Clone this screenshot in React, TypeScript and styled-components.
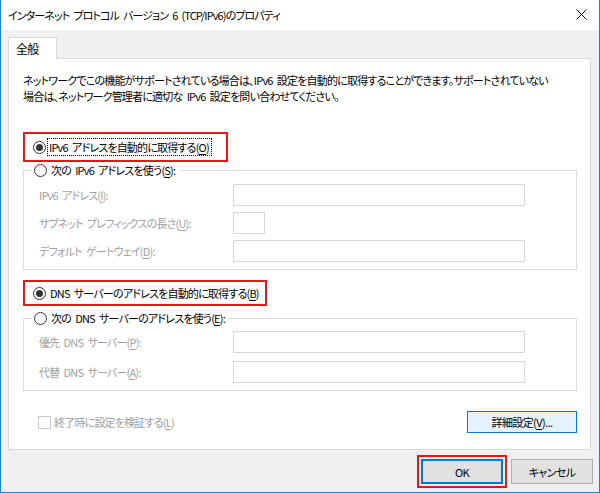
import React from "react"
import styled, { createGlobalStyle } from "styled-components"

const GlobalStyle = createGlobalStyle`
  html, body {
    margin: 0;
    padding: 0;
    background: #ffffff;
  }
  * {
    box-sizing: border-box;
  }
`

const font = `"Noto Sans CJK JP", "Noto Sans", sans-serif`

const Window = styled.div`
  width: 600px;
  height: 493px;
  display: flex;
  flex-direction: column;
  border: 1px solid #1883d7;
  border-top: none;
  background: #f0f0f0;
  font-family: ${font};
  font-size: 11px;
  letter-spacing: -0.8px;
  word-spacing: 2.5px;
  font-feature-settings: "palt" 1;
  color: #000;
  white-space: nowrap;
`

const TitleBar = styled.div`
  height: 30px;
  flex: none;
  display: flex;
  align-items: center;
  justify-content: space-between;
  background: #ffffff;
  padding: 0 12px 1px 7px;
`

const Title = styled.span`
  font-size: 11px;
  letter-spacing: -0.9px;
`

const CloseButton = styled.span`
  display: flex;
  align-items: center;
  margin-top: -1px;
`

const Body = styled.div`
  flex: 1;
  display: flex;
  flex-direction: column;
  padding: 7px 8px 0 7px;
`

const TabStrip = styled.div`
  display: flex;
  position: relative;
  z-index: 1;
`

const Tab = styled.div`
  width: 49px;
  height: 22px;
  padding: 3px 0 0 7px;
  background: #ffffff;
  border: 1px solid #d9d9d9;
  border-bottom: none;
  line-height: 16px;
  font-size: 12px;
`

const Panel = styled.div`
  margin-top: -1px;
  background: #ffffff;
  border: 1px solid #d9d9d9;
  padding: 13px 13px 16px 14px;
  display: flex;
  flex-direction: column;
`

const Description = styled.p`
  margin: 0 0 28px;
  line-height: 16px;
`

const Highlight = styled.div<{ $width: number; $pad: number; $top?: number }>`
  width: ${({ $width }) => $width}px;
  margin-top: ${({ $top }) => $top ?? 0}px;
  border: 2px solid #e8141b;
  padding: ${({ $pad }) => $pad}px 0 ${({ $pad }) => $pad}px 8px;
  display: flex;
`

const RadioRow = styled.label`
  display: flex;
  align-items: center;
  gap: 2px;
  height: 16px;
  line-height: 16px;
`

const RadioCircle = styled.span<{ $checked?: boolean }>`
  width: 13px;
  height: 13px;
  flex: none;
  border-radius: 50%;
  border: 1px solid #333333;
  background: #ffffff;
  display: flex;
  align-items: center;
  justify-content: center;

  &::after {
    content: "";
    width: 7px;
    height: 7px;
    border-radius: 50%;
    background: ${({ $checked }) => ($checked ? "#333333" : "transparent")};
  }
`

const FocusText = styled.span`
  outline: 1px dotted #000;
  outline-offset: 0;
  padding: 0 2px 0 1px;
`

const PlainText = styled.span`
  padding-left: 2px;
`

const GroupBox = styled.fieldset<{ $top: number; $gap: number }>`
  margin: ${({ $top }) => $top}px 0 0;
  border: 1px solid #dcdcdc;
  padding: ${({ $top }) => ($top > 0 ? 5 : 6)}px 51px 7px 15px;
  display: flex;
  flex-direction: column;
  gap: ${({ $gap }) => $gap}px;
  min-width: 0;
`

const Legend = styled.legend`
  margin-left: -7px;
  padding: 0 4px 0 2px;
  background: #ffffff;
`

const FieldRow = styled.div`
  display: flex;
  align-items: center;
  justify-content: space-between;
  height: 22px;
`

const FieldLabel = styled.span`
  color: #a0a0a0;
`

const TextBox = styled.div<{ $width: number; $spacer?: number }>`
  width: ${({ $width }) => $width}px;
  margin-right: ${({ $spacer }) => $spacer ?? 0}px;
  height: 22px;
  border: 1px solid #d7d7d7;
  background: #ffffff;
`

const OptionsRow = styled.div`
  margin-top: 20px;
  display: flex;
  align-items: center;
  justify-content: space-between;
  padding-left: 15px;
`

const CheckRow = styled.label`
  display: flex;
  align-items: center;
  gap: 3px;
  color: #a0a0a0;
`

const CheckBox = styled.span`
  width: 13px;
  height: 13px;
  border: 1px solid #c6c6c6;
  background: #ffffff;
`

const Button = styled.button<{ $variant?: "accent" | "default" | "plain" }>`
  font-family: ${font};
  font-size: 11px;
  letter-spacing: -0.6px;
  font-feature-settings: "palt" 1;
  color: #000;
  height: ${({ $variant }) => ($variant === "accent" ? 22 : 25)}px;
  width: ${({ $variant }) => ($variant === "accent" ? 110 : 82)}px;
  padding: 0;
  border-radius: 0;
  background: ${({ $variant }) => ($variant === "accent" ? "#e5f1fb" : "#e1e1e1")};
  border: ${({ $variant }) =>
    $variant === "default"
      ? "2px solid #0078d7"
      : $variant === "accent"
      ? "1px solid #0078d7"
      : "1px solid #adadad"};
  line-height: 16px;
`

const Footer = styled.div`
  display: flex;
  justify-content: flex-end;
  align-items: center;
  gap: 4px;
  padding: 5px 0 0;
  margin-right: -2px;
`

const ButtonHighlight = styled.div`
  border: 2px solid #e8141b;
  padding: 2px;
  display: flex;
`

const Key = styled.u`
  text-underline-offset: 2px;
`

const CloseIcon = () => (
  <svg width="11" height="11" viewBox="0 0 11 11">
    <path d="M0.5 0.5 L10.5 10.5 M10.5 0.5 L0.5 10.5" stroke="#000" strokeWidth="1" />
  </svg>
)

export default function App() {
  return (
    <>
      <GlobalStyle />
      <Window>
        <TitleBar>
          <Title>インターネット プロトコル バージョン 6 (TCP/IPv6)のプロパティ</Title>
          <CloseButton>
            <CloseIcon />
          </CloseButton>
        </TitleBar>
        <Body>
          <TabStrip>
            <Tab>全般</Tab>
          </TabStrip>
          <Panel>
            <Description>
              ネットワークでこの機能がサポートされている場合は、IPv6 設定を自動的に取得することができます。サポートされていない
              <br />
              場合は、ネットワーク管理者に適切な IPv6 設定を問い合わせてください。
            </Description>

            <Highlight $width={205} $pad={5}>
              <RadioRow>
                <RadioCircle $checked />
                <FocusText>
                  IPv6 アドレスを自動的に取得する(<Key>O</Key>)
                </FocusText>
              </RadioRow>
            </Highlight>

            <GroupBox $top={0} $gap={6}>
              <Legend>
                <RadioRow>
                  <RadioCircle />
                  <PlainText>
                    次の IPv6 アドレスを使う(<Key>S</Key>):
                  </PlainText>
                </RadioRow>
              </Legend>
              <FieldRow>
                <FieldLabel>
                  IPv6 アドレス(<Key>I</Key>):
                </FieldLabel>
                <TextBox $width={292} />
              </FieldRow>
              <FieldRow>
                <FieldLabel>
                  サブネット プレフィックスの長さ(<Key>U</Key>):
                </FieldLabel>
                <TextBox $width={32} $spacer={260} />
              </FieldRow>
              <FieldRow>
                <FieldLabel>
                  デフォルト ゲートウェイ(<Key>D</Key>):
                </FieldLabel>
                <TextBox $width={292} />
              </FieldRow>
            </GroupBox>

            <Highlight $width={244} $pad={3} $top={10}>
              <RadioRow>
                <RadioCircle $checked />
                <PlainText>
                  DNS サーバーのアドレスを自動的に取得する(<Key>B</Key>)
                </PlainText>
              </RadioRow>
            </Highlight>

            <GroupBox $top={4} $gap={8}>
              <Legend>
                <RadioRow>
                  <RadioCircle />
                  <PlainText>
                    次の DNS サーバーのアドレスを使う(<Key>E</Key>):
                  </PlainText>
                </RadioRow>
              </Legend>
              <FieldRow>
                <FieldLabel>
                  優先 DNS サーバー(<Key>P</Key>):
                </FieldLabel>
                <TextBox $width={292} />
              </FieldRow>
              <FieldRow>
                <FieldLabel>
                  代替 DNS サーバー(<Key>A</Key>):
                </FieldLabel>
                <TextBox $width={292} />
              </FieldRow>
            </GroupBox>

            <OptionsRow>
              <CheckRow>
                <CheckBox />
                <span>
                  終了時に設定を検証する(<Key>L</Key>)
                </span>
              </CheckRow>
              <Button $variant="accent">
                詳細設定(<Key>V</Key>)...
              </Button>
            </OptionsRow>
          </Panel>
          <Footer>
            <ButtonHighlight>
              <Button $variant="default">OK</Button>
            </ButtonHighlight>
            <Button $variant="plain">キャンセル</Button>
          </Footer>
        </Body>
      </Window>
    </>
  )
}
